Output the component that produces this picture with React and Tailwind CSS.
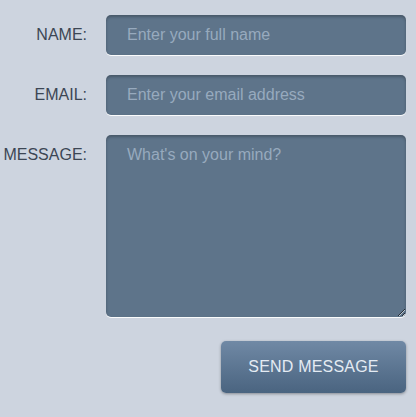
export default function App() {
  const field =
    "w-[300px] rounded-[5px] bg-[#5e748a] text-[16px] text-[#e6edf4] placeholder:text-[#97aabe] outline-none pl-[21px] pr-3 shadow-[inset_0_2px_3px_rgba(0,0,0,0.25),0_1px_0_rgba(255,255,255,0.9)]";
  return (
    <div className="w-[416px] h-[417px] bg-[#cdd4df] font-['Liberation_Sans',Arial,sans-serif]">
      <div className="grid grid-cols-[87px_300px] gap-x-[19px] gap-y-[20px] pt-[15px]">
        <label className="flex items-center justify-end h-[40px] text-[16px] text-[#3c4654] whitespace-nowrap">NAME:</label>
        <input className={field + " h-[40px]"} placeholder="Enter your full name" />
        <label className="flex items-center justify-end h-[40px] text-[16px] text-[#3c4654] whitespace-nowrap">EMAIL:</label>
        <input className={field + " h-[40px]"} placeholder="Enter your email address" />
        <label className="flex justify-end pt-[10px] text-[16px] leading-[20px] text-[#3c4654] whitespace-nowrap">MESSAGE:</label>
        <textarea
          className={field + " h-[182px] pt-[10px] leading-[20px] block"}
          placeholder="What's on your mind?"
        />
      </div>
      <div className="flex justify-end pr-[10px] pt-[24px]">
        <button className="w-[185px] h-[52px] rounded-[5px] bg-gradient-to-b from-[#7089a5] to-[#4a6480] text-[16px] text-[#e4ebf3] tracking-[0.2px] shadow-[0_1px_3px_rgba(0,0,0,0.35)]">
          SEND MESSAGE
        </button>
      </div>
    </div>
  );
}
